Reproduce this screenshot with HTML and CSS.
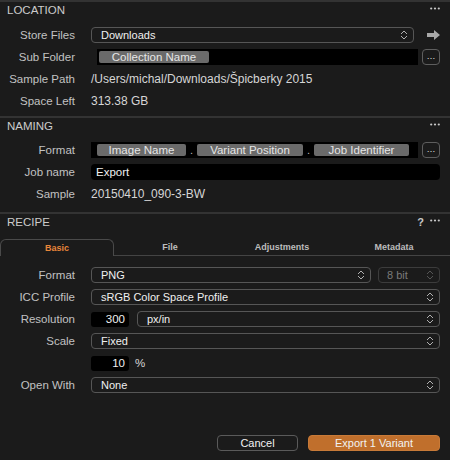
FILE: index.html
```html
<!DOCTYPE html>
<html>
<head>
<meta charset="utf-8">
<link rel="stylesheet" href="styles.css">
</head>
<body>
<div class="panel">

  <section class="section s-location">
    <div class="header"><span class="title">LOCATION</span>
      <span class="hicons"><svg class="dots" width="10" height="3" viewBox="0 0 10 3"><circle cx="1.2" cy="1.5" r="1.1"/><circle cx="5" cy="1.5" r="1.1"/><circle cx="8.8" cy="1.5" r="1.1"/></svg></span>
    </div>
    <div class="rows">
      <div class="row">
        <span class="label">Store Files</span>
        <div class="select grow"><span class="stext">Downloads</span>
          <svg class="chev" width="8" height="12" viewBox="0 0 8 12"><path d="M1 5 L4 2 L7 5 M1 7 L4 10 L7 7"/></svg></div>
        <svg class="arrow" width="13" height="10" viewBox="0 0 13 10"><path d="M0 3 H7 V0 L13 5 L7 10 V7 H0 Z"/></svg>
      </div>
      <div class="row">
        <span class="label">Sub Folder</span>
        <div class="field tokens sub grow"><span class="token t-coll">Collection Name</span></div>
        <div class="more">…</div>
      </div>
      <div class="row">
        <span class="label">Sample Path</span>
        <span class="value">/Users/michal/Downloads/Špicberky 2015</span>
      </div>
      <div class="row">
        <span class="label">Space Left</span>
        <span class="value">313.38 GB</span>
      </div>
    </div>
  </section>

  <section class="section s-naming">
    <div class="header"><span class="title">NAMING</span>
      <span class="hicons"><svg class="dots" width="10" height="3" viewBox="0 0 10 3"><circle cx="1.2" cy="1.5" r="1.1"/><circle cx="5" cy="1.5" r="1.1"/><circle cx="8.8" cy="1.5" r="1.1"/></svg></span>
    </div>
    <div class="rows">
      <div class="row">
        <span class="label">Format</span>
        <div class="field tokens grow">
          <span class="token t-img">Image Name</span><span class="sep">.</span><span class="token t-var">Variant Position</span><span class="sep">.</span><span class="token t-job">Job Identifier</span>
        </div>
        <div class="more">…</div>
      </div>
      <div class="row">
        <span class="label">Job name</span>
        <div class="field input grow">Export</div>
      </div>
      <div class="row">
        <span class="label">Sample</span>
        <span class="value">20150410_090-3-BW</span>
      </div>
    </div>
  </section>

  <section class="section s-recipe">
    <div class="header"><span class="title">RECIPE</span>
      <span class="hicons"><span class="q">?</span><svg class="dots" width="10" height="3" viewBox="0 0 10 3"><circle cx="1.2" cy="1.5" r="1.1"/><circle cx="5" cy="1.5" r="1.1"/><circle cx="8.8" cy="1.5" r="1.1"/></svg></span>
    </div>
    <div class="tabs">
      <div class="tab active">Basic</div>
      <div class="tab">File</div>
      <div class="tab">Adjustments</div>
      <div class="tab">Metadata</div>
    </div>
    <div class="rows recipe-rows">
      <div class="row">
        <span class="label">Format</span>
        <div class="select grow"><span class="stext">PNG</span>
          <svg class="chev" width="8" height="12" viewBox="0 0 8 12"><path d="M1 5 L4 2 L7 5 M1 7 L4 10 L7 7"/></svg></div>
        <div class="select disabled bits"><span class="stext">8 bit</span>
          <svg class="chev" width="8" height="12" viewBox="0 0 8 12"><path d="M1 5 L4 2 L7 5 M1 7 L4 10 L7 7"/></svg></div>
      </div>
      <div class="row">
        <span class="label">ICC Profile</span>
        <div class="select grow"><span class="stext">sRGB Color Space Profile</span>
          <svg class="chev" width="8" height="12" viewBox="0 0 8 12"><path d="M1 5 L4 2 L7 5 M1 7 L4 10 L7 7"/></svg></div>
      </div>
      <div class="row">
        <span class="label">Resolution</span>
        <div class="num">300</div>
        <div class="select grow"><span class="stext">px/in</span>
          <svg class="chev" width="8" height="12" viewBox="0 0 8 12"><path d="M1 5 L4 2 L7 5 M1 7 L4 10 L7 7"/></svg></div>
      </div>
      <div class="row">
        <span class="label">Scale</span>
        <div class="select grow"><span class="stext">Fixed</span>
          <svg class="chev" width="8" height="12" viewBox="0 0 8 12"><path d="M1 5 L4 2 L7 5 M1 7 L4 10 L7 7"/></svg></div>
      </div>
      <div class="row">
        <span class="label"></span>
        <div class="num">10</div>
        <span class="unit">%</span>
      </div>
      <div class="row">
        <span class="label">Open With</span>
        <div class="select grow"><span class="stext">None</span>
          <svg class="chev" width="8" height="12" viewBox="0 0 8 12"><path d="M1 5 L4 2 L7 5 M1 7 L4 10 L7 7"/></svg></div>
      </div>
    </div>
    <div class="buttons">
      <div class="btn cancel">Cancel</div>
      <div class="btn primary">Export 1 Variant</div>
    </div>
  </section>

</div>
</body>
</html>
```
FILE: styles.css
```css
html, body {
  margin: 0;
  padding: 0;
  background: #1b1b1b;
}
body {
  width: 450px;
  height: 460px;
  overflow: hidden;
  font-family: "Liberation Sans", Arial, sans-serif;
  font-size: 11px;
  color: #c4c4c4;
}
.panel {
  width: 450px;
}
.section {
  border-top: 2px solid #333333;
}
.s-location { padding-bottom: 7px; }
.s-naming { padding-bottom: 10px; }
.header {
  height: 17px;
  display: flex;
  align-items: center;
  justify-content: space-between;
  padding: 0 10px 2px 7px;
  box-sizing: border-box;
}
.title {
  color: #cccccc;
  font-size: 11.5px;
}
.hicons {
  display: flex;
  align-items: center;
  gap: 6px;
  margin-top: -2px;
}
.dots { fill: #c8c8c8; display: block; }
.q {
  color: #c8c8c8;
  font-size: 11px;
  font-weight: bold;
  margin-top: 2px;
}
.rows {
  margin-top: 8px;
  display: flex;
  flex-direction: column;
  gap: 6px;
}
.s-naming .rows { margin-top: 7px; }
.row {
  height: 16px;
  display: flex;
  align-items: center;
  padding-right: 10px;
}
.label {
  width: 75px;
  flex: none;
  text-align: right;
  margin-right: 16px;
  color: #c2c2c2;
  font-size: 11.5px;
}
.grow { flex: 1; min-width: 0; }
.value { color: #d6d6d6; font-size: 12px; }
.select {
  height: 16px;
  box-sizing: border-box;
  border: 1px solid #565656;
  border-radius: 4px;
  display: flex;
  align-items: center;
  justify-content: space-between;
  padding: 0 5px 0 9px;
}
.stext { color: #f0f0f0; }
.chev {
  display: block;
  fill: none;
  stroke: #b0b0b0;
  stroke-width: 1;
}
.select.disabled { border-color: #3c3c3c; }
.select.disabled .stext { color: #7a7a7a; }
.select.disabled .chev { stroke: #555555; }
.bits { width: 62px; flex: none; margin-left: 7px; padding-left: 8px; }
.arrow {
  display: block;
  fill: #a8a8a8;
  margin-left: 13px;
  flex: none;
}
.field {
  height: 16px;
  box-sizing: border-box;
  background: #000;
  display: flex;
  align-items: center;
}
.tokens { padding-left: 6px; }
.sub { margin-left: 6px; padding-left: 2px; }
.token {
  height: 12px;
  line-height: 12px;
  background: #6a6a6a;
  color: #e6e6e6;
  border-radius: 2px;
  text-align: center;
  flex: none;
  font-size: 11.5px;
}
.t-coll { width: 110px; }
.t-img { width: 89px; }
.t-var { width: 106px; }
.t-job { width: 95px; }
.sep {
  width: 11px;
  text-align: center;
  color: #bbbbbb;
  line-height: 12px;
}
.more {
  width: 18px;
  height: 16px;
  box-sizing: border-box;
  border: 1px solid #5e5e5e;
  border-radius: 4px;
  margin-left: 4px;
  flex: none;
  color: #e0e0e0;
  font-size: 9px;
  text-align: center;
  line-height: 12px;
}
.input {
  border-radius: 4px;
  padding-left: 5px;
  color: #f0f0f0;
  font-size: 11.5px;
}
.tabs {
  margin-top: 8px;
  height: 17px;
  display: flex;
}
.tab {
  flex: 1;
  box-sizing: border-box;
  border-bottom: 1px solid #444444;
  text-align: center;
  font-size: 9px;
  font-weight: bold;
  color: #bdbdbd;
  line-height: 17px;
}
.tab.active {
  border: 1px solid #4a4a4a;
  border-bottom: none;
  border-radius: 6px 6px 0 0;
  color: #e8863a;
  line-height: 16px;
}
.recipe-rows { margin-top: 11px; }
.num {
  width: 38px;
  height: 15px;
  background: #000;
  border-radius: 3px;
  flex: none;
  text-align: right;
  padding-right: 4px;
  box-sizing: border-box;
  color: #f0f0f0;
  line-height: 15px;
  margin-right: 8px;
  font-size: 11.5px;
}
.unit { color: #d8d8d8; margin-left: -2px; font-size: 11.5px; }
.buttons {
  margin-top: 42px;
  display: flex;
  justify-content: flex-end;
  gap: 10px;
  padding-right: 10px;
}
.btn {
  height: 16px;
  box-sizing: border-box;
  border-radius: 4px;
  text-align: center;
  line-height: 14px;
  color: #f2f2f2;
}
.cancel {
  width: 81px;
  border: 1px solid #5a5a5a;
}
.primary {
  width: 132px;
  background: #c06f2c;
  border: 1px solid #c87a38;
}
```
